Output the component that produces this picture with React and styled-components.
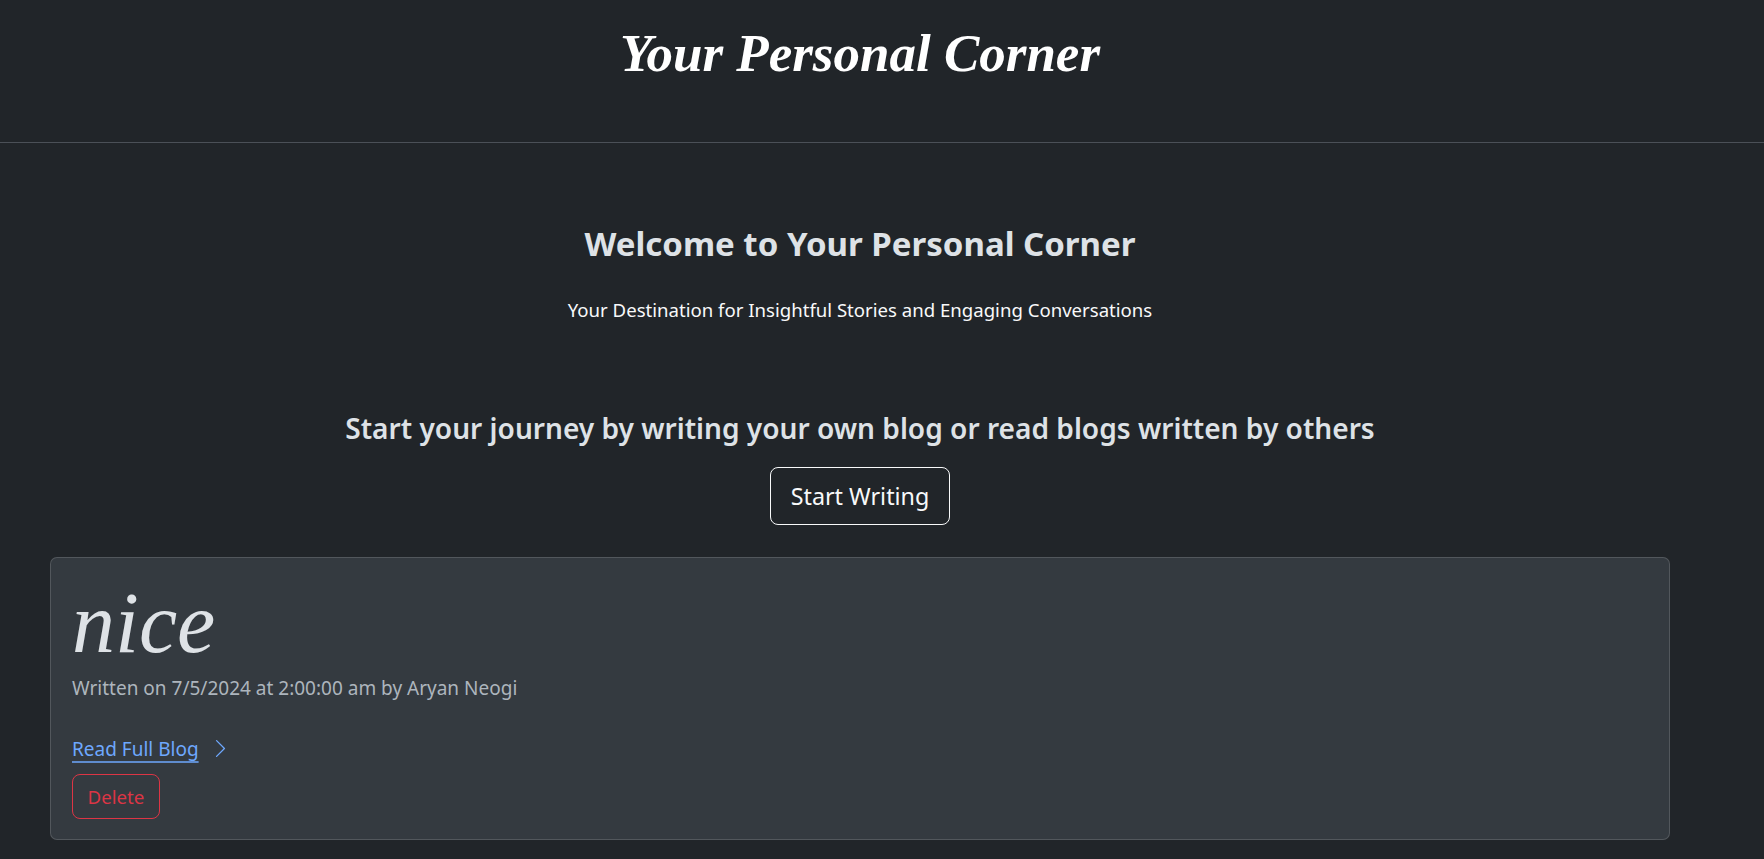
import styled, { createGlobalStyle } from "styled-components";

const GlobalStyle = createGlobalStyle`
  body {
    margin: 0;
    background-color: #212529;
    color: #dee2e6;
    font-family: "Noto Sans", "Open Sans", sans-serif;
  }
`;

const ChevronRight = () => (
  <svg width="21" height="21" viewBox="0 0 16 16" fill="currentColor">
    <path
      fillRule="evenodd"
      d="M4.646 1.646a.5.5 0 0 1 .708 0l6 6a.5.5 0 0 1 0 .708l-6 6a.5.5 0 0 1-.708-.708L10.293 8 4.646 2.354a.5.5 0 0 1 0-.708"
    />
  </svg>
);

const App = () => {
  return (
    <>
      <GlobalStyle />
      <Header>
        <SiteTitle>Your Personal Corner</SiteTitle>
      </Header>
      <Main>
        <Hero>
          <HeroTitle>Welcome to Your Personal Corner</HeroTitle>
          <HeroLead>
            Your Destination for Insightful Stories and Engaging Conversations
          </HeroLead>
        </Hero>
        <CallToAction>
          <CtaText>
            Start your journey by writing your own blog or read blogs written
            by others
          </CtaText>
          <OutlineButton>Start Writing</OutlineButton>
        </CallToAction>
        <BlogCard>
          <BlogTitle>nice</BlogTitle>
          <BlogMeta>Written on 7/5/2024 at 2:00:00 am by Aryan Neogi</BlogMeta>
          <ReadLink href="#">
            <span>Read Full Blog</span>
            <ChevronRight />
          </ReadLink>
          <DeleteButton>Delete</DeleteButton>
        </BlogCard>
      </Main>
    </>
  );
};

const Header = styled.header`
  display: flex;
  justify-content: center;
  align-items: flex-start;
  height: 120px;
  padding: 22px 44px 0 0;
  border-bottom: 1px solid #4b5057;
`;

const SiteTitle = styled.h1`
  margin: 0;
  font-family: "Liberation Serif", "DejaVu Serif", serif;
  font-style: italic;
  font-weight: 700;
  font-size: 53px;
  line-height: 1.2;
  color: #ffffff;
`;

const Main = styled.main`
  margin: 0 94px 0 50px;
  text-align: center;
`;

const Hero = styled.section`
  padding-top: 81px;
`;

const HeroTitle = styled.h2`
  margin: 0;
  font-size: 33px;
  line-height: 1.2;
  font-weight: 700;
  color: #dee2e6;
`;

const HeroLead = styled.p`
  margin: 32px 0 0;
  font-size: 18.6px;
  line-height: 1.5;
  color: #f8f9fa;
`;

const CallToAction = styled.section`
  padding-top: 88px;
  display: flex;
  flex-direction: column;
  align-items: center;
`;

const CtaText = styled.h3`
  margin: 0 0 21px;
  font-size: 28.1px;
  line-height: 1.23;
  font-weight: 600;
  color: #dee2e6;
`;

const OutlineButton = styled.button`
  font-family: inherit;
  font-size: 23.3px;
  line-height: 1.5;
  color: #f8f9fa;
  background: transparent;
  border: 1px solid #f8f9fa;
  border-radius: 8px;
  padding: 10.5px 20px;
  cursor: pointer;
`;

const BlogCard = styled.article`
  margin-top: 32px;
  background-color: #343a40;
  border: 1px solid rgba(255, 255, 255, 0.15);
  border-radius: 7px;
  padding: 14px 21px 20px;
  text-align: left;
  display: flex;
  flex-direction: column;
  align-items: flex-start;
`;

const BlogTitle = styled.h2`
  margin: 0;
  font-family: "Liberation Serif", "DejaVu Serif", serif;
  font-style: italic;
  font-weight: 400;
  font-size: 86px;
  line-height: 1.2;
  color: #dee2e6;
`;

const BlogMeta = styled.p`
  margin: -1px 0 32px;
  font-size: 19px;
  line-height: 1.5;
  color: #adb5bd;
`;

const ReadLink = styled.a`
  display: inline-flex;
  align-items: center;
  gap: 11px;
  font-size: 19px;
  line-height: 1.5;
  color: #6ea8fe;
  text-decoration: none;

  span {
    text-decoration: underline;
    text-decoration-thickness: 2px;
    text-underline-offset: 5px;
    text-decoration-color: rgba(110, 168, 254, 0.75);
  }
`;

const DeleteButton = styled.button`
  margin-top: 11px;
  font-family: inherit;
  font-size: 18.7px;
  line-height: 1.5;
  color: #dc3545;
  background: transparent;
  border: 1px solid #dc3545;
  border-radius: 8px;
  padding: 7.5px 14.5px;
  cursor: pointer;
`;

export default App;
